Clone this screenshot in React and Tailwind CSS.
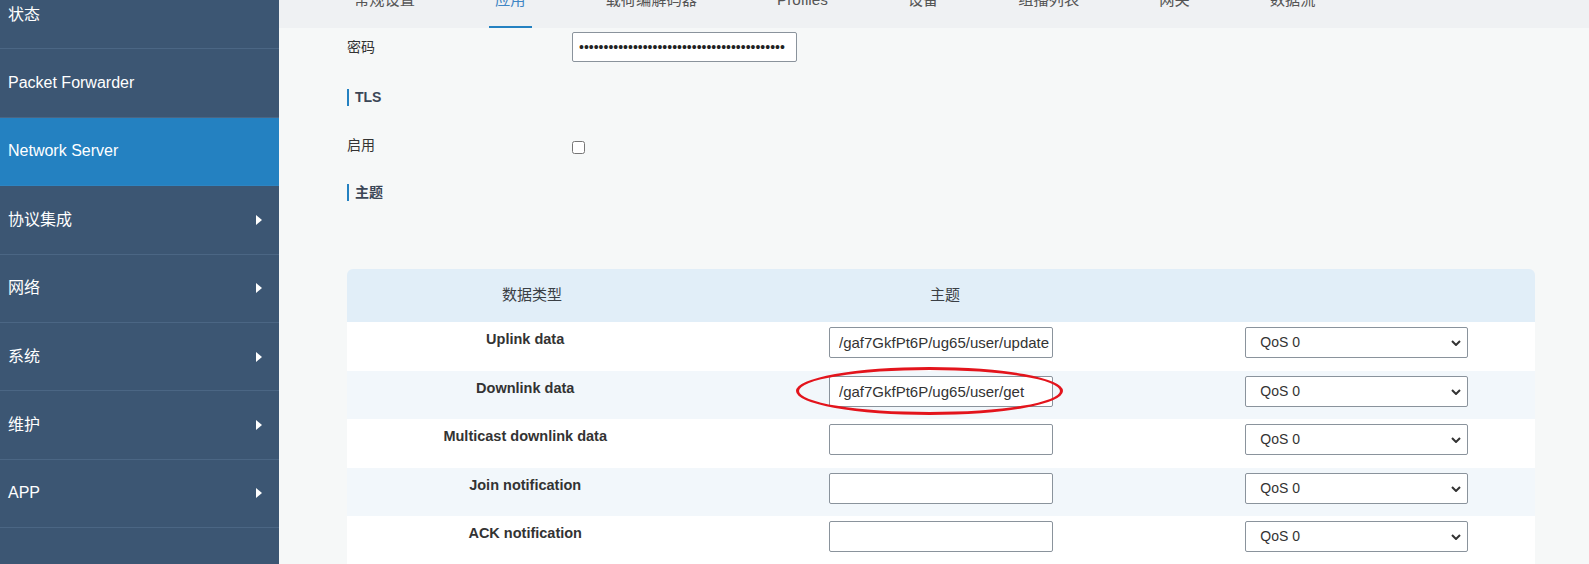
import React from 'react';

const menu = [
  { label: '状态' },
  { label: 'Packet Forwarder' },
  { label: 'Network Server', active: true },
  { label: '协议集成', arrow: true },
  { label: '网络', arrow: true },
  { label: '系统', arrow: true },
  { label: '维护', arrow: true },
  { label: 'APP', arrow: true },
  { label: '' },
];

const tabs = ['常规设置', '应用', '载荷编解码器', 'Profiles', '设备', '组播列表', '网关', '数据流'];

const topics = [
  { type: 'Uplink data', topic: '/gaf7GkfPt6P/ug65/user/update' },
  { type: 'Downlink data', topic: '/gaf7GkfPt6P/ug65/user/get', marked: true },
  { type: 'Multicast downlink data', topic: '' },
  { type: 'Join notification', topic: '' },
  { type: 'ACK notification', topic: '' },
];

const Arrow = () => (
  <svg width="6" height="10" viewBox="0 0 6 10" className="mr-[17px]">
    <polygon points="0,0 6,5 0,10" fill="#ffffff" />
  </svg>
);

const Sidebar = () => (
  <div className="w-[279px] shrink-0 bg-[#3c5673]">
    {menu.map((item, i) => (
      <div
        key={i}
        className={`flex h-[68.4px] items-center justify-between border-b pl-[8px] text-[16px] text-white ${
          item.active ? 'border-[#2d84c2] bg-[#2481c1]' : 'border-[#4b6684]'
        }`}
      >
        <span>{item.label}</span>
        {item.arrow && <Arrow />}
      </div>
    ))}
  </div>
);

const SectionTitle = ({ children, className }) => (
  <div className={`flex h-[17px] items-center border-l-2 border-[#2481c1] pl-[6px] text-[14px] font-bold text-[#3b4656] ${className}`}>
    {children}
  </div>
);

const QosSelect = () => (
  <div className="relative mx-auto w-[223px]">
    <select
      defaultValue="0"
      className="h-[31px] w-full appearance-none rounded-[2px] border border-[#8a939c] bg-white pl-[14px] text-[14px] text-[#333] outline-none"
    >
      <option value="0">QoS 0</option>
      <option value="1">QoS 1</option>
      <option value="2">QoS 2</option>
    </select>
    <svg width="10" height="6" viewBox="0 0 10 6" className="pointer-events-none absolute right-[7px] top-[13px]">
      <path d="M1 1 L5 5 L9 1" fill="none" stroke="#333" strokeWidth="2" />
    </svg>
  </div>
);

export default function App() {
  return (
    <div className="h-[564px] overflow-hidden bg-[#f6f8f8] font-['Liberation_Sans','Noto_Sans_CJK_SC',sans-serif]">
      <div className="-mt-[19px] flex">
        <Sidebar />

        <div className="min-w-0 flex-1">
          <div className="flex h-[47px] bg-[#eff1f3] pl-[35px]">
            {tabs.map((t, i) => (
              <div key={t} className="px-[34px]">
                <div
                  className={`h-[47px] px-[6px] text-[15.25px] leading-[38px] ${
                    i === 1 ? 'border-b-2 border-[#2481c1] text-[#3f86c4]' : 'text-[#555]'
                  }`}
                >
                  {t}
                </div>
              </div>
            ))}
          </div>

          <div className="pl-[68px] pr-[54px]">
            <div className="mt-[4px] flex h-[30px] items-center text-[14px] text-[#333]">
              <span className="w-[225px]">密码</span>
              <input
                type="text"
                readOnly
                value={'•'.repeat(42)}
                className="h-[30px] w-[225px] rounded-[2px] border border-[#8a939c] bg-white pl-[6px] text-[14px] text-[#222] outline-none"
              />
            </div>

            <SectionTitle className="mt-[27px]">TLS</SectionTitle>

            <div className="mt-[29px] flex h-[20px] items-start text-[14px] text-[#333]">
              <span className="w-[225px] leading-[20px]">启用</span>
              <input type="checkbox" className="mt-[6px] ml-0 h-[13px] w-[13px]" />
            </div>

            <SectionTitle className="mt-[29px] font-semibold">主题</SectionTitle>

            <div className="mt-[68px] overflow-hidden rounded-t-[6px]">
              <div className="grid h-[53px] grid-cols-[30%_40%_30%] items-center bg-[#e1eef8] pl-[8px] text-center text-[15px] text-[#3a3f45]">
                <span>数据类型</span>
                <span>主题</span>
                <span></span>
              </div>
              {topics.map((row, i) => (
                <div
                  key={row.type}
                  className={`grid h-[48.6px] grid-cols-[30%_40%_30%] items-start pt-[5px] ${
                    i % 2 === 0 ? 'bg-white' : 'bg-[#f2f7fb]'
                  }`}
                >
                  <span className="pt-[1px] text-center text-[14.5px] font-bold leading-[22px] text-[#333]">{row.type}</span>
                  <div className="relative mx-auto w-[224px]">
                    <input
                      type="text"
                      readOnly
                      value={row.topic}
                      className="h-[31px] w-full rounded-[2px] border border-[#8a939c] bg-white pl-[9px] text-[15px] text-[#333] outline-none"
                    />
                    {row.marked && (
                      <div className="pointer-events-none absolute left-[-33px] top-[-9px] h-[48px] w-[267px] rounded-[50%] border-[3px] border-[#e3141c]" />
                    )}
                  </div>
                  <QosSelect />
                </div>
              ))}
            </div>
          </div>
        </div>
      </div>
    </div>
  );
}
